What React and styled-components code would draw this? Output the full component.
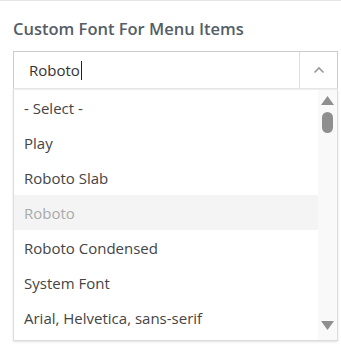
import React from 'react';
import styled, { createGlobalStyle } from 'styled-components';

const GlobalStyle = createGlobalStyle`
  body {
    margin: 0;
    background: #fff;
    font-family: "Open Sans", "Noto Sans", sans-serif;
  }
`;

const Panel = styled.div`
  width: 341px;
  height: 351px;
  box-sizing: border-box;
  border-top: 1px solid #e2e4e7;
  padding: 17px 3px 0 13px;
  position: relative;
`;

const Title = styled.h3`
  margin: 0 0 11px;
  font-size: 16.5px;
  font-weight: 600;
  color: #555d66;
  letter-spacing: 0;
  line-height: 22px;
`;

const SelectBox = styled.div`
  position: relative;
`;

const Control = styled.div`
  display: flex;
  height: 38px;
  box-sizing: border-box;
  border: 1px solid #ccc;
  border-bottom-color: #e8e8e8;
  background: #fff;
`;

const Value = styled.div`
  flex: 1;
  display: flex;
  align-items: center;
  padding-left: 15px;
  font-size: 15px;
  color: #333;
`;

const Caret = styled.span`
  display: inline-block;
  width: 1px;
  height: 19px;
  background: #222;
  margin-left: 1px;
`;

const Toggle = styled.div`
  width: 37px;
  border-left: 1px solid #ddd;
  display: flex;
  align-items: center;
  justify-content: center;
`;

const Menu = styled.div`
  display: flex;
  height: 252px;
  box-sizing: border-box;
  border: 1px solid #ddd;
  border-top: 1px solid #eee;
  box-shadow: 0 1px 2px rgba(0, 0, 0, 0.12);
  overflow: hidden;
`;

const List = styled.div`
  flex: 1;
`;

const Option = styled.div`
  height: 35px;
  display: flex;
  align-items: center;
  padding-left: 10px;
  font-size: 15px;
  color: ${(p) => (p.$active ? '#aaa' : '#444')};
  background: ${(p) => (p.$active ? '#f4f4f4' : 'transparent')};
  white-space: nowrap;
`;

const Scrollbar = styled.div`
  width: 19px;
  background: #f9f9f9;
  display: flex;
  flex-direction: column;
  align-items: center;
  padding-top: 6px;
  box-sizing: border-box;
  position: relative;
`;

const Thumb = styled.div`
  width: 11px;
  height: 21px;
  border-radius: 6px;
  background: #8f8f8f;
  margin-top: 7px;
`;

const DownArrow = styled.div`
  position: absolute;
  bottom: 5px;
  left: 3px;
`;

const options = [
  '- Select -',
  'Play',
  'Roboto Slab',
  'Roboto',
  'Roboto Condensed',
  'System Font',
  'Arial, Helvetica, sans-serif',
];

export default function App() {
  return (
    <>
      <GlobalStyle />
      <Panel>
        <Title>Custom Font For Menu Items</Title>
        <SelectBox>
          <Control>
            <Value>
              Roboto<Caret />
            </Value>
            <Toggle>
              <svg width="12" height="8" viewBox="0 0 12 8">
                <path d="M1.5 6.5 L6 2 L10.5 6.5" fill="none" stroke="#999" strokeWidth="1.6" />
              </svg>
            </Toggle>
          </Control>
          <Menu>
            <List>
              {options.map((o) => (
                <Option key={o} $active={o === 'Roboto'}>
                  {o}
                </Option>
              ))}
            </List>
            <Scrollbar>
              <svg width="13" height="9" viewBox="0 0 13 9">
                <path d="M6.5 0 L13 9 L0 9 Z" fill="#8f8f8f" />
              </svg>
              <Thumb />
              <DownArrow>
                <svg width="13" height="9" viewBox="0 0 13 9">
                  <path d="M0 0 L13 0 L6.5 9 Z" fill="#8f8f8f" />
                </svg>
              </DownArrow>
            </Scrollbar>
          </Menu>
        </SelectBox>
      </Panel>
    </>
  );
}
